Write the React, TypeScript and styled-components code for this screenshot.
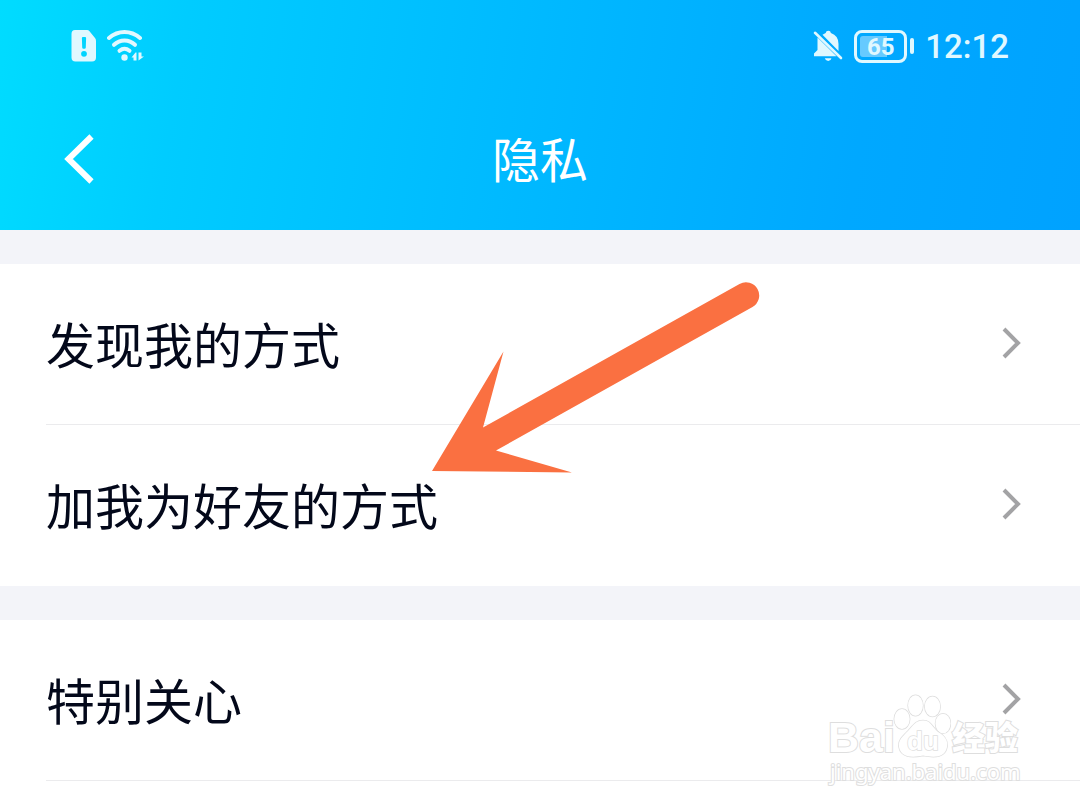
import React from "react";
import styled, { createGlobalStyle } from "styled-components";

const GlobalStyle = createGlobalStyle`
  * { box-sizing: border-box; }
  body {
    margin: 0;
    background: #ffffff;
    font-family: Roboto, "Noto Sans CJK SC", sans-serif;
  }
`;

const Page = styled.div`
  position: relative;
  min-height: 100vh;
  overflow: hidden;
  background: #ffffff;
`;

const Header = styled.header`
  height: 230px;
  color: #ffffff;
  background: linear-gradient(99deg, #00dcff 0%, #00ccff 17%, #00b9ff 49%, #00a8ff 79%, #00a2ff 100%);
`;

const StatusBar = styled.div`
  display: flex;
  align-items: center;
  justify-content: space-between;
  height: 92px;
  padding: 0 71px;
  color: #e0f8ff;
`;

const StatusGroup = styled.div<{ $gap: number }>`
  display: flex;
  align-items: center;
  gap: ${(p) => p.$gap}px;
`;

const Battery = styled.div`
  display: flex;
  align-items: center;
  gap: 3px;
`;

const BatteryBody = styled.div`
  display: flex;
  align-items: center;
  justify-content: center;
  width: 53px;
  height: 33px;
  border: 3px solid currentColor;
  border-radius: 8px;
  padding: 3px;
`;

const BatteryLevel = styled.span`
  flex: 1;
  height: 21px;
  border-radius: 3px;
  background: linear-gradient(90deg, #66caff 65%, transparent 65%);
  font-size: 24px;
  font-weight: 700;
  line-height: 22px;
  text-align: center;
`;

const BatteryTip = styled.span`
  width: 4px;
  height: 16px;
  border-radius: 2px;
  background: currentColor;
`;

const Clock = styled.time`
  font-size: 33px;
  font-weight: 500;
  line-height: 40px;
  padding-top: 2px;
`;

const TitleBar = styled.div`
  display: grid;
  grid-template-columns: 1fr auto 1fr;
  align-items: center;
  height: 138px;
  padding: 0 64px 4px;
`;

const BackButton = styled.button`
  display: flex;
  justify-self: start;
  padding: 0;
  border: 0;
  background: none;
  color: inherit;
  cursor: pointer;
`;

const Title = styled.h1`
  margin: 0;
  padding-top: 6px;
  font-size: 48px;
  font-weight: 400;
  line-height: 72px;
`;

const List = styled.main`
  position: relative;
`;

const Group = styled.section`
  border-top: 34px solid #f3f4f9;
  background: #ffffff;
`;

const Row = styled.button`
  position: relative;
  display: flex;
  align-items: center;
  justify-content: space-between;
  width: 100%;
  height: 161px;
  padding: 0 59px 4px 46px;
  border: 0;
  background: none;
  color: #03081a;
  font-family: inherit;
  font-size: 49px;
  line-height: 72px;
  text-align: left;
  cursor: pointer;

  & + &::before,
  &:last-child:first-child::after {
    content: "";
    position: absolute;
    left: 46px;
    right: 0;
    height: 1px;
    background: #ebebed;
  }
  & + &::before { top: -1px; }
  &:last-child:first-child::after { bottom: 0; }
`;

const RowLabel = styled.span`
  padding-top: 10px;
`;

const Arrow = styled.svg`
  position: absolute;
  left: 430px;
  top: 50px;
  pointer-events: none;
`;

const Watermark = styled.div`
  position: absolute;
  right: 58px;
  bottom: 26px;
  width: 194px;
  color: #ffffff;
  -webkit-text-stroke: 2px #dedede;
  paint-order: stroke fill;
  pointer-events: none;
`;

const Brand = styled.div`
  display: flex;
  align-items: flex-end;
  height: 64px;
`;

const BrandLatin = styled.span`
  width: 65px;
  font-family: "Liberation Sans", sans-serif;
  font-size: 43px;
  font-weight: 700;
  line-height: 42px;
`;

const BrandChinese = styled.span`
  margin-left: 1px;
  font-family: "Noto Sans CJK SC", sans-serif;
  font-size: 33px;
  font-weight: 900;
  line-height: 44px;
`;

const SiteName = styled.div`
  padding-left: 2px;
  font-family: "Noto Sans", sans-serif;
  font-size: 22px;
  line-height: 26px;
  white-space: nowrap;
`;

const SimIcon = () => (
  <svg width="26" height="32" viewBox="0 0 26 32" aria-hidden="true">
    <path
      fill="currentColor"
      fillRule="evenodd"
      d="M4 0H16Q17.500 0 18.500 1.200L24 8Q25 9.200 25 11V27.500Q25 31.500 21 31.500H4.500Q.5 31.500 .5 27.500V4Q.5 0 4 0ZM12 7Q10.800 7 10.900 8.200L11.200 17.500Q11.300 18.700 12.500 18.700H13.500Q14.700 18.700 14.800 17.500L15.100 8.200Q15.200 7 14 7ZM13 20.900A2.900 2.900 0 1 0 13 26.700A2.900 2.900 0 1 0 13 20.900Z"
    />
  </svg>
);

const WifiIcon = () => (
  <svg width="40" height="32" viewBox="0 0 40 32" fill="none" stroke="currentColor" strokeWidth="4" strokeLinecap="round" aria-hidden="true">
    <path d="M2 8Q9 2 17.500 2T33 8" />
    <path d="M7 14.800Q11.500 10.400 17.500 10.400T28 14.800" />
    <path d="M12.500 20.800Q17.500 16.800 22.500 20.800" />
    <circle cx="17.500" cy="27.500" r="3.200" fill="currentColor" stroke="none" />
    <path d="M28.500 22.500L24.500 27.500H26.500V30.500H29.500V22.500ZM31.500 22.500V30.500L37 26.500H34.500V22.500Z" fill="currentColor" stroke="none" />
  </svg>
);

const MutedBellIcon = () => (
  <svg width="30" height="32" viewBox="0 0 30 32" aria-hidden="true">
    <path
      fill="currentColor"
      d="M9.500 4.800Q11.500 3.400 12.700 3Q13 .8 15.300 .8T17.900 3Q25.500 5.500 25.500 14V21ZM4.500 7.500L23.500 26.200H1V23.500L4.500 20Z M11.800 28.300H18.500Q17.800 31 15.200 31T11.800 28.300Z"
    />
    <path d="M2 2.800L28 28" stroke="currentColor" strokeWidth="2.600" strokeLinecap="round" />
  </svg>
);

const BackIcon = () => (
  <svg width="32" height="50" viewBox="0 0 32 50" fill="none" stroke="currentColor" strokeWidth="6" aria-hidden="true">
    <path d="M27.500 2.500L4.500 25L27.500 47.500" />
  </svg>
);

const ChevronIcon = () => (
  <svg width="20" height="34" viewBox="0 0 20 34" fill="none" stroke="#a3a3a5" strokeWidth="4" aria-hidden="true">
    <path d="M3 3L17 17L3 31" />
  </svg>
);

const PawIcon = () => (
  <svg width="58" height="64" viewBox="0 0 58 64" fill="#ffffff" stroke="#dedede" strokeWidth="1.500" aria-hidden="true">
    <ellipse cx="9" cy="25" rx="7.700" ry="10" />
    <ellipse cx="22.500" cy="11.500" rx="7.400" ry="10.300" />
    <ellipse cx="39.500" cy="12.500" rx="7.700" ry="10" />
    <ellipse cx="50" cy="29.500" rx="7.500" ry="9.800" />
    <path d="M30 26.500C38 26.500 39 33 45 38C52 42 55 46 54 53C52 63 43 64 30 61.500C18 64 8 63 6 53C5 46 10 42 15 37C20 32 22 26.500 30 26.500Z" />
    <text x="30" y="56" textAnchor="middle" fontFamily="Liberation Sans, sans-serif" fontSize="26" fontWeight="700">
      du
    </text>
  </svg>
);

const groups = [["发现我的方式", "加我为好友的方式"], ["特别关心"]];

export default function App() {
  return (
    <Page>
      <GlobalStyle />
      <Header>
        <StatusBar>
          <StatusGroup $gap={10}>
            <SimIcon />
            <WifiIcon />
          </StatusGroup>
          <StatusGroup $gap={11}>
            <MutedBellIcon />
            <Battery>
              <BatteryBody>
                <BatteryLevel>65</BatteryLevel>
              </BatteryBody>
              <BatteryTip />
            </Battery>
            <Clock>12:12</Clock>
          </StatusGroup>
        </StatusBar>
        <TitleBar>
          <BackButton type="button" aria-label="返回">
            <BackIcon />
          </BackButton>
          <Title>隐私</Title>
        </TitleBar>
      </Header>
      <List>
        {groups.map((rows) => (
          <Group key={rows[0]}>
            {rows.map((label) => (
              <Row key={label} type="button">
                <RowLabel>{label}</RowLabel>
                <ChevronIcon />
              </Row>
            ))}
          </Group>
        ))}
        <Arrow width="332" height="196" viewBox="0 0 332 196" aria-hidden="true">
          <path fill="#fa7041" d="M2 191L73.500 71.500L53 147.500L309.500 4A13.200 13.200 0 0 1 322.500 27L66 170.500L142 192.500Z" />
        </Arrow>
      </List>
      <Watermark>
        <Brand>
          <BrandLatin>Bai</BrandLatin>
          <PawIcon />
          <BrandChinese>经验</BrandChinese>
        </Brand>
        <SiteName>jingyan.baidu.com</SiteName>
      </Watermark>
    </Page>
  );
}
